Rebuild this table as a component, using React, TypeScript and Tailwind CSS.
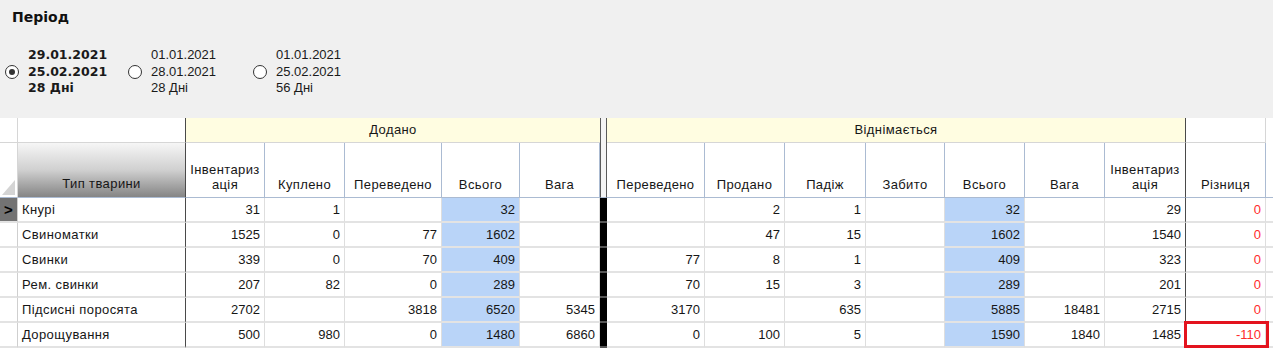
import React from "react";

type Cell = number | "";

interface Row {
  name: string;
  added: Cell[]; // Інвентаризація, Куплено, Переведено, Всього, Вага
  removed: Cell[]; // Переведено, Продано, Падіж, Забито, Всього, Вага, Інвентаризація
  diff: number;
}

const rows: Row[] = [
  { name: "Кнурі", added: [31, 1, "", 32, ""], removed: ["", 2, 1, "", 32, "", 29], diff: 0 },
  { name: "Свиноматки", added: [1525, 0, 77, 1602, ""], removed: ["", 47, 15, "", 1602, "", 1540], diff: 0 },
  { name: "Свинки", added: [339, 0, 70, 409, ""], removed: [77, 8, 1, "", 409, "", 323], diff: 0 },
  { name: "Рем. свинки", added: [207, 82, 0, 289, ""], removed: [70, 15, 3, "", 289, "", 201], diff: 0 },
  { name: "Підсисні поросята", added: [2702, "", 3818, 6520, 5345], removed: [3170, "", 635, "", 5885, 18481, 2715], diff: 0 },
  { name: "Дорощування", added: [500, 980, 0, 1480, 6860], removed: [0, 100, 5, "", 1590, 1840, 1485], diff: -110 },
];

const addedHeads = [["Інвентариз", "ація"], ["Куплено"], ["Переведено"], ["Всього"], ["Вага"]];
const removedHeads = [["Переведено"], ["Продано"], ["Падіж"], ["Забито"], ["Всього"], ["Вага"], ["Інвентариз", "ація"]];

function Radio({ checked }: { checked?: boolean }) {
  return (
    <span className="flex h-[14px] w-[14px] shrink-0 items-center justify-center rounded-full border border-[#333] bg-white">
      {checked && <span className="h-[6px] w-[6px] rounded-full bg-[#333]" />}
    </span>
  );
}

function Period() {
  return (
    <div className="h-[118px] bg-[#f0f0f0]">
      <div className="pl-3 pt-[9px] font-['DejaVu_Sans',sans-serif] text-[14px] font-bold leading-[16px] text-[#111]">
        Період
      </div>
      <div className="mt-[22px] flex items-center pl-[5px] text-[13px] leading-[16.5px] text-[#1a1a1a]">
        <div className="flex w-[123px] items-center gap-[9px]">
          <Radio checked />
          <div className="font-['DejaVu_Sans',sans-serif] text-[12.5px] font-bold">
            <div>29.01.2021</div>
            <div>25.02.2021</div>
            <div>28 Дні</div>
          </div>
        </div>
        <div className="flex w-[125px] items-center gap-[9px] font-['Liberation_Sans',sans-serif]">
          <Radio />
          <div>
            <div>01.01.2021</div>
            <div>28.01.2021</div>
            <div>28 Дні</div>
          </div>
        </div>
        <div className="flex items-center gap-[9px] font-['Liberation_Sans',sans-serif]">
          <Radio />
          <div>
            <div>01.01.2021</div>
            <div>25.02.2021</div>
            <div>56 Дні</div>
          </div>
        </div>
      </div>
    </div>
  );
}

function HeadCell({ lines, dark }: { lines: string[]; dark?: boolean }) {
  return (
    <div
      className={`flex h-[55px] flex-col items-center justify-end border-b border-r border-b-[#abbbd2] bg-white pb-[5px] text-center leading-[15px] tracking-[0.4px] ${
        dark ? "border-r-[#4a4a4a]" : "border-r-[#abbbd2]"
      }`}
    >
      {lines.map((l) => (
        <span key={l}>{l}</span>
      ))}
    </div>
  );
}

function NumCell({ v, blue, dark }: { v: Cell; blue?: boolean; dark?: boolean }) {
  return (
    <div
      className={`flex h-[25px] items-center justify-end border-b-2 border-r border-b-[#e3e3e3] pr-[4px] ${
        blue ? "bg-[#b9d4f8]" : "bg-white"
      } ${dark ? "border-r-[#4a4a4a]" : "border-r-[#dedede]"}`}
    >
      {v}
    </div>
  );
}

export default function App() {
  return (
    <div className="h-[357px] w-[1273px] overflow-hidden bg-white font-['Liberation_Sans',sans-serif] text-[13px] text-[#161616]">
      <Period />
      <div className="grid grid-cols-[18px_168px_79px_80px_97px_78px_80px_7px_98px_80px_81px_79px_80px_80px_81px_80px_7px]">
        {/* group header row */}
        <div className="h-[25px] border-b border-r border-[#d6d6d6] bg-white" />
        <div className="h-[25px] border-b border-r border-b-[#d6d6d6] border-r-[#4a4a4a] bg-white" />
        <div className="col-span-5 flex h-[25px] items-center justify-center border-b border-[#d6d6d6] bg-[#fffde1] tracking-[0.4px]">
          Додано
        </div>
        <div className="h-[25px] border-x border-[#5a5a5a] bg-[#f4f4f4]" />
        <div className="col-span-7 flex h-[25px] items-center justify-center border-b border-r border-b-[#d6d6d6] border-r-[#4a4a4a] bg-[#fffde1] tracking-[0.4px]">
          Віднімається
        </div>
        <div className="h-[25px] border-b border-r border-[#d6d6d6] bg-white" />
        <div className="h-[25px] bg-white" />

        {/* column header row */}
        <div className="relative h-[55px] border-b border-r border-b-[#abbbd2] border-r-[#d6d6d6] bg-white">
          <svg className="absolute bottom-[2px] right-[2px]" width="13" height="15" viewBox="0 0 13 15">
            <polygon points="13,0 13,15 0,15" fill="#d4d4d4" />
          </svg>
        </div>
        <div className="flex h-[55px] items-end justify-center border-b border-r border-b-[#abbbd2] border-r-[#4a4a4a] bg-gradient-to-b from-[#f6f6f6] via-[#d0d0d0] to-[#858585] pb-[4px] tracking-[0.4px]">
          Тип тварини
        </div>
        {addedHeads.map((h, i) => (
          <HeadCell key={"a" + i} lines={h} />
        ))}
        <div className="h-[55px] border-x border-b border-x-[#5a5a5a] border-b-[#abbbd2] bg-[#f4f4f4]" />
        {removedHeads.map((h, i) => (
          <HeadCell key={"r" + i} lines={h} dark={i === removedHeads.length - 1} />
        ))}
        <HeadCell lines={["Різниця"]} />
        <div className="h-[55px] border-b border-[#abbbd2] bg-white" />

        {/* data rows */}
        {rows.map((r, ri) => (
          <React.Fragment key={r.name}>
            <div
              className={`flex h-[25px] items-center justify-center border-b-2 border-r border-b-[#e3e3e3] border-r-[#cfcfcf] ${
                ri === 0 ? "bg-[#737373]" : "bg-white"
              }`}
            >
              {ri === 0 && <span className="text-[15px] font-bold leading-none text-black">&gt;</span>}
            </div>
            <div className="flex h-[25px] items-center border-b-2 border-r border-b-[#e3e3e3] border-r-[#4a4a4a] bg-white pl-[4px] tracking-[0.4px]">
              {r.name}
            </div>
            {r.added.map((v, i) => (
              <NumCell key={"a" + i} v={v} blue={i === 3} />
            ))}
            <div className="h-[25px] border-b-2 border-b-[#555] bg-black" />
            {r.removed.map((v, i) => (
              <NumCell key={"r" + i} v={v} blue={i === 4} dark={i === 6} />
            ))}
            <div className="relative flex h-[25px] items-center justify-end border-b-2 border-r border-b-[#e3e3e3] border-r-[#dedede] bg-white pr-[4px] text-[#ff2b2b]">
              {r.diff}
              {r.diff !== 0 && (
                <span className="absolute -bottom-[2px] -left-[2px] -right-[4px] -top-[2px] border-[3px] border-[#e3131e]" />
              )}
            </div>
            <div className="h-[25px] border-b-2 border-b-[#e3e3e3] bg-white" />
          </React.Fragment>
        ))}
      </div>
    </div>
  );
}
